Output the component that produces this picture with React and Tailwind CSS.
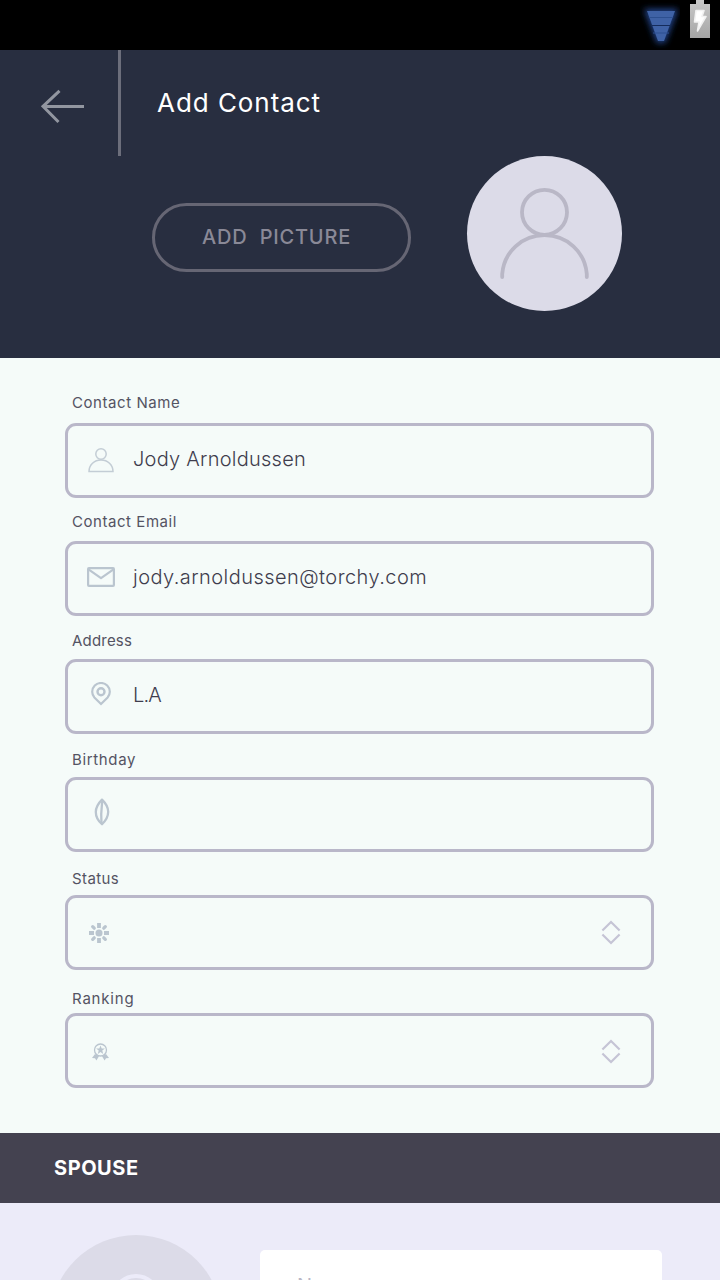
const PersonIcon = () => (
  <svg className="-mt-px ml-[19px] h-[28px] w-[28px]" viewBox="0 0 28 28" fill="none" stroke="#c3cdd5" strokeWidth="1.5">
    <circle cx="14" cy="8" r="5.2" />
    <path d="M2 25.5C2 18.8 7.3 14 14 14S26 18.8 26 25.5Z" />
  </svg>
);

const MailIcon = () => (
  <svg className="ml-[19px] -mt-[3px] h-[20px] w-[28px]" viewBox="0 0 28 20" fill="none" stroke="#bac5cf" strokeWidth="2.2" strokeLinejoin="round">
    <rect x="1.1" y="1.1" width="25.8" height="17.8" rx="0.8" />
    <path d="M1.5 2.4L14 11.2L26.5 2.4" />
  </svg>
);

const PinIcon = () => (
  <svg className="ml-[23px] -mt-[6px] h-[24px] w-[20px]" viewBox="0 0 20 24" fill="none" stroke="#bac5cf">
    <path strokeWidth="2.2" d="M10 22L3.4 15.6A8.8 8.8 0 0 1 1.2 9.8A8.8 8.8 0 0 1 18.8 9.8A8.8 8.8 0 0 1 16.6 15.6Z" />
    <circle strokeWidth="2.4" cx="10" cy="9.7" r="3.5" />
  </svg>
);

const LeafIcon = () => (
  <svg className="ml-[26px] -mt-[5px] h-[28px] w-[16px]" viewBox="0 0 16 28" fill="none" stroke="#bac5cf" strokeWidth="2.3" strokeLinejoin="round">
    <path d="M8 1.6C12.4 5.8 14.2 9.7 14.2 13.8C14.2 19 11.6 22.8 8 26.2C4 22.8 1.8 19 1.8 14C1.8 9.2 4.2 5.4 8 1.6Z" />
    <path d="M8.4 2C7.8 8 6.5 14 7.5 26" />
  </svg>
);

const SunIcon = () => (
  <svg className="ml-[21px] h-[20px] w-[20px]" viewBox="0 0 20 20" fill="#bac5cf" stroke="#bac5cf" strokeWidth="3.8">
    <circle cx="10" cy="10" r="3.5" stroke="none" />
    <path d="M10 0V5M10 15V20M0 10H5M15 10H20" />
    <path strokeLinecap="round" strokeWidth="3.3" d="M3.7 3.7L5.2 5.2M14.8 14.8L16.3 16.3M3.7 16.3L5.2 14.8M14.8 5.2L16.3 3.7" />
  </svg>
);

const MedalIcon = () => (
  <svg className="ml-6 mt-[2px] h-[18px] w-[18px]" viewBox="0 0 18 18" fill="#bac5cf">
    <circle cx="8.5" cy="7" r="6" fill="none" stroke="#bac5cf" strokeWidth="1.3" />
    <path d="M8.5 2.5L9.7 5.6H12.9L10.3 7.6L11.2 10.9L8.5 9L5.8 10.9L6.7 7.6L4.1 5.6H7.3Z" />
    <path d="M3 10.9L7 13.3L4.4 17.6L3 15.3L0 15ZM14 10.9L10 13.3L12.6 17.6L14 15.3L17 15Z" />
  </svg>
);

const SortIcon = ({ className }) => (
  <svg className={`mr-[29px] ml-auto h-[26px] w-[22px] ${className}`} viewBox="0 0 22 26" fill="none" stroke="#c5c4d5" strokeWidth="2.2">
    <path d="M2.4 11.5L11 3L19.6 11.5M2.4 15.5L11 24L19.6 15.5" />
  </svg>
);

const fields = [
  { label: "Contact Name", labelClass: "pt-[14px] tracking-[0.57px]", Icon: PersonIcon, value: "Jody Arnoldussen", valueClass: "tracking-[0.25px]" },
  { label: "Contact Email", labelClass: "pt-[15px] tracking-[0.55px]", Icon: MailIcon, value: "jody.arnoldussen@torchy.com", valueClass: "tracking-[0.45px]" },
  { label: "Address", labelClass: "pt-4 tracking-[0.2px]", Icon: PinIcon, value: "L.A", valueClass: "tracking-[-0.8px]" },
  { label: "Birthday", labelClass: "pt-[17px] tracking-[0.65px]", Icon: LeafIcon },
  { label: "Status", labelClass: "pt-[18px] tracking-[0.4px]", Icon: SunIcon, sortClass: "-mt-px" },
  { label: "Ranking", labelClass: "pt-5 tracking-[0.8px]", Icon: MedalIcon, sortClass: "mt-px" },
];

function Field({ label, labelClass, Icon, value, valueClass, sortClass }) {
  return (
    <div>
      <div className={`h-[43px] pl-[7px] text-[15px] leading-[18px] font-normal text-[#545363] ${labelClass}`}>{label}</div>
      <div className="flex h-[75px] items-center rounded-[11px] border-3 border-[#b9b7c9]">
        <div className="w-[65px] shrink-0">
          <Icon />
        </div>
        {value && <span className={`-mt-[3px] text-[20px] font-light whitespace-nowrap text-[#3f3d4d] ${valueClass}`}>{value}</span>}
        {sortClass && <SortIcon className={sortClass} />}
      </div>
    </div>
  );
}

function StatusBar() {
  return (
    <div className="flex h-[50px] items-start justify-end bg-black pr-[10px]">
      <svg className="h-[50px] w-[40px]" viewBox="0 0 40 50">
        <defs>
          <filter id="glow" x="-50%" y="-50%" width="200%" height="200%">
            <feGaussianBlur stdDeviation="3" />
          </filter>
        </defs>
        <path d="M4 9H38L25 43H17Z" fill="#24458c" filter="url(#glow)" />
        <path d="M7 11H35L24 41H18Z" fill="#3f62a6" />
        <path d="M9 17.5H33M13 33H29" stroke="#2c4f90" strokeWidth="1" />
        <path d="M12 25.5H30" stroke="#152c5c" strokeWidth="1" />
      </svg>
      <svg className="ml-[10px] h-[40px] w-[20px]" viewBox="0 0 20 40">
        <defs>
          <linearGradient id="cell" x2="0" y2="1">
            <stop stopColor="#c8c8c8" />
            <stop offset="1" stopColor="#a6a6a6" />
          </linearGradient>
        </defs>
        <path d="M6 0H14V4H20V38H0V4H6Z" fill="url(#cell)" />
        <path d="M6 10.5H14L12 16.5H16L7.5 31L9 22H4.5Z" fill="#fff" stroke="#f2f2f2" strokeWidth="1.6" strokeLinejoin="round" />
      </svg>
    </div>
  );
}

export default function App() {
  return (
    <div className="flex h-[1280px] w-[720px] flex-col overflow-hidden bg-[#f5fbf9] font-['Inter',sans-serif]">
      <StatusBar />
      <header className="h-[308px] shrink-0 bg-[#282e40]">
        <div className="flex h-[106px]">
          <div className="flex w-[121px] border-r-3 border-[#6c6e7b]">
            <svg className="mt-[38px] ml-[40px] h-[36px] w-[46px]" viewBox="0 0 46 36" fill="none" stroke="#9296a0" strokeWidth="3">
              <path d="M19.5 2.8L3 18.4L18.5 34M3 18.4H44" />
            </svg>
          </div>
          <h1 className="mt-[35px] ml-[36px] text-[26px] leading-9 font-normal tracking-[0.95px] text-white">Add Contact</h1>
        </div>
        <div className="flex pl-[152px]">
          <button className="mt-[47px] h-[69px] w-[259px] rounded-full border-3 border-[#666674] pr-[10px] pb-0.5 text-[20px] font-medium tracking-[0.8px] whitespace-pre text-[#8a8997]">
            {"ADD  PICTURE"}
          </button>
          <div className="ml-14 h-[155px] w-[155px] rounded-full bg-[#dcdbe8]">
            <svg className="h-full w-full" viewBox="0 0 155 155" fill="none" stroke="#b9b7c6" strokeWidth="3.8" strokeLinecap="round">
              <circle cx="77.5" cy="56.3" r="22.5" />
              <path d="M35.2 121V118C37 96 55 79.2 77.5 79.2S118 96 119.8 118V121" />
            </svg>
          </div>
        </div>
      </header>
      <main className="h-[775px] shrink-0 px-[65px] pt-[22px]">
        <div className="w-[589px]">
          {fields.map((f) => (
            <Field key={f.label} {...f} />
          ))}
        </div>
      </main>
      <div className="flex h-[70px] shrink-0 items-center bg-[#444250] pl-[54px]">
        <h2 className="text-[20px] font-bold tracking-[0.55px] text-white">SPOUSE</h2>
      </div>
      <section className="flex h-[77px] shrink-0 items-start overflow-hidden bg-[#ecebf9]">
        <div className="mt-8 ml-[50px] h-[172px] w-[172px] shrink-0 rounded-full bg-[#dcdbe8]">
          <svg className="h-full w-full" viewBox="0 0 172 172" fill="none" stroke="#ecebf9" strokeWidth="4">
            <circle cx="86" cy="64" r="23" />
            <path d="M43 130C43 107 62 87 86 87S129 107 129 130" />
          </svg>
        </div>
        <div className="mt-[47px] ml-[38px] h-[74px] w-[402px] rounded-[5px] bg-white pt-[22px] pl-[37px]">
          <span className="text-[20px] leading-7 text-[#b9b7c6]">Name</span>
        </div>
      </section>
    </div>
  );
}
